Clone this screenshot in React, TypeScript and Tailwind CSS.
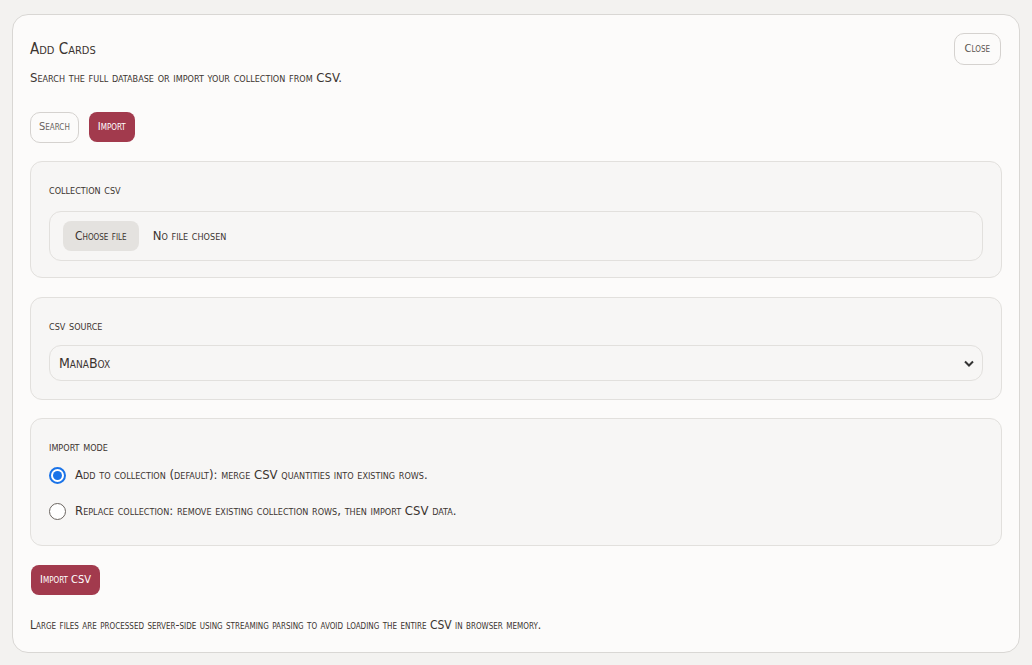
import React from "react";

const font = { fontFamily: '"Liberation Sans Narrow", "DejaVu Sans Condensed", "Liberation Sans", sans-serif', fontVariant: "small-caps" } as React.CSSProperties;

export default function App() {
  return (
    <div className="min-h-[665px] w-full bg-[#f3f2f0] px-3 pt-[14px] pb-3 text-[#3b3430]" style={font}>
      <div className="rounded-[16px] border border-[#d9d7d4] bg-[#fcfbfa] px-[17px] pt-[18px] pb-[19px]">
        <div className="flex items-start justify-between">
          <div>
            <h1 className="mt-[3px] text-[15px] leading-[26px]">Add Cards</h1>
            <p className="mt-[6px] text-[13px] leading-[20px]">Search the full database or import your collection from CSV.</p>
          </div>
          <button className="mr-[1px] h-[32px] rounded-[10px] border border-[#d5d2cf] px-[10px] text-[11px] text-[#5a5450]">Close</button>
        </div>
        <div className="mt-[24px] flex gap-[10px]">
          <button className="h-[31px] rounded-[10px] border border-[#d5d2cf] px-[8px] text-[11px] text-[#6a6460]">Search</button>
          <button className="h-[30px] rounded-[8px] bg-[#a23a4d] px-[9px] text-[11px] text-white">Import</button>
        </div>

        <div className="mt-[18px] flex flex-col">
          <section className="rounded-[12px] border border-[#e2e0dd] bg-[#f7f6f5] px-[18px] pt-[18px] pb-[16px]">
            <div className="text-[13px] leading-[20px]">collection csv</div>
            <div className="mt-[11px] flex h-[50px] items-center rounded-[12px] border border-[#e2e0dd] bg-[#f7f6f5] px-[13px]">
              <span className="flex h-[30px] items-center rounded-[8px] bg-[#e4e2df] px-[12px] text-[12px]">Choose file</span>
              <span className="ml-[14px] text-[13px]">No file chosen</span>
            </div>
          </section>

          <section className="mt-[19px] rounded-[12px] border border-[#e2e0dd] bg-[#f7f6f5] px-[18px] pt-[18px] pb-[18px]">
            <div className="text-[13px] leading-[20px]">csv source</div>
            <div className="mt-[9px] flex h-[36px] items-center justify-between rounded-[12px] border border-[#e2e0dd] bg-[#f7f6f5] pl-[9px] pr-[8px]">
              <span className="text-[14px]">ManaBox</span>
              <svg width="10" height="7" viewBox="0 0 10 7"><path d="M1 1.5 L5 5.5 L9 1.5" fill="none" stroke="#333" strokeWidth="2" /></svg>
            </div>
          </section>

          <section className="mt-[18px] rounded-[12px] border border-[#e2e0dd] bg-[#f7f6f5] px-[18px] pt-[18px] pb-[23px]">
            <div className="text-[13px] leading-[20px]">import mode</div>
            <label className="mt-[7px] flex items-center gap-[9px]">
              <span className="flex h-[17px] w-[17px] items-center justify-center rounded-full border-2 border-[#1a73e8] bg-white">
                <span className="h-[9px] w-[9px] rounded-full bg-[#1a73e8]" />
              </span>
              <span className="text-[13px] leading-[22px]">Add to collection (default): merge CSV quantities into existing rows.</span>
            </label>
            <label className="mt-[14px] flex items-center gap-[9px]">
              <span className="h-[17px] w-[17px] rounded-full border border-[#6b6560] bg-white" />
              <span className="text-[13px] leading-[22px]">Replace collection: remove existing collection rows, then import CSV data.</span>
            </label>
          </section>
        </div>

        <button className="mt-[19px] ml-[1px] h-[30px] rounded-[8px] bg-[#a23a4d] px-[9px] text-[11px] text-white">Import CSV</button>
        <p className="mt-[22px] text-[12px] leading-[16px]">Large files are processed server-side using streaming parsing to avoid loading the entire CSV in browser memory.</p>
      </div>
    </div>
  );
}
